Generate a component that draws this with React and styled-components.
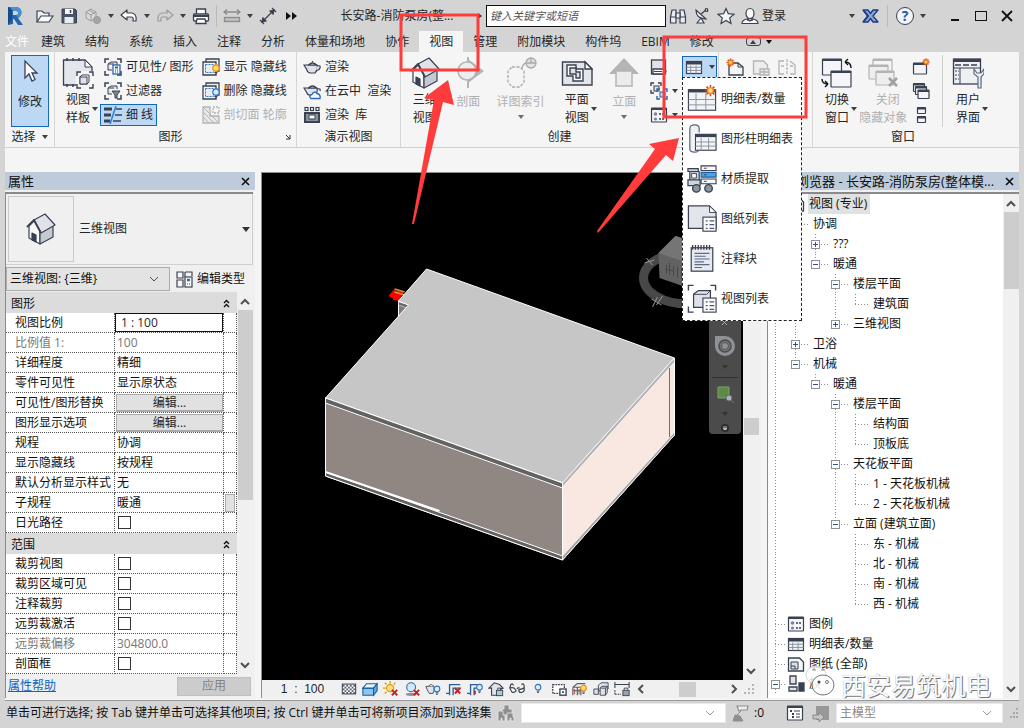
import React from "react";
import styled, { createGlobalStyle, css } from "styled-components";

const ink = "#3a4150";
const pale = "#dfe3e9";
const off = "#b4b4b4";
const red = "#ff3b3b";

const Global = createGlobalStyle`
  *, *::before, *::after { box-sizing: border-box; }
  body { margin: 0; background: #d4d4d4; }
  body, button, input, select {
    font-family: "Open Sans", "Noto Sans CJK SC", sans-serif;
    font-size: 12px;
    line-height: 18px;
    color: #262626;
  }
  button { padding: 0; border: 0; background: none; white-space: nowrap; }
  svg { display: block; flex: none; }
`;

/* ---------- drawings ---------- */

const Brackets = ({ s = 18, c = ink }) => (
  <path d={`M1 5V1H5M${s - 5} 1H${s - 1}V5M1 ${s - 5}V${s - 1}H5M${s - 5} ${s - 1}H${s - 1}V${s - 5}`} fill="none" stroke={c} strokeWidth="1.5" />
);
const Spark = ({ x, y, r = 4 }) => (
  <g>
    <path d={`M${x} ${y - r}V${y + r}M${x - r} ${y}H${x + r}M${x - r * 0.7} ${y - r * 0.7}L${x + r * 0.7} ${y + r * 0.7}M${x + r * 0.7} ${y - r * 0.7}L${x - r * 0.7} ${y + r * 0.7}`} stroke="#d5451c" strokeWidth="1.6" />
    <circle cx={x} cy={y} r={r * 0.5} fill="#ffe27a" stroke="#f08a1c" strokeWidth="1.3" />
  </g>
);
const Bulb = ({ x, y, c = "#d5ecff", s = "#2f72b8" }) => (
  <g>
    <circle cx={x} cy={y} r="3.2" fill={c} stroke={s} strokeWidth="1.2" />
    <path d={`M${x - 1.5} ${y + 4.5}h3M${x - 1} ${y + 6}h2`} stroke={ink} />
  </g>
);
const Cross = ({ x, y }) => <path d={`M${x} ${y}l6 6M${x + 6} ${y}l-6 6`} stroke="#c8201c" strokeWidth="2.2" />;
const Win = ({ x, y, w, h, c = ink, f = "#f3f5f8" }) => (
  <g>
    <rect x={x} y={y} width={w} height={h} rx="0.5" fill={f} stroke={c} strokeWidth="1.2" />
    <path d={`M${x} ${y + 1}h${w}`} stroke={c} strokeWidth="2" />
  </g>
);
const Grid = ({ x, y, w, h, c = ink }) => (
  <g>
    <rect x={x} y={y} width={w} height={h} fill="#f2f4f7" stroke={c} strokeWidth="1.2" />
    <path d={`M${x} ${y + 1.5}h${w}`} stroke={c} strokeWidth="3" />
    <path d={`M${x + w * 0.28} ${y + 4}v${h - 4}M${x + w * 0.64} ${y + 4}v${h - 4}M${x} ${y + h * 0.48}h${w}M${x} ${y + h * 0.74}h${w}`} stroke="#8a909b" />
  </g>
);
const ListCard = ({ x, y, w = 14, h = 15 }) => (
  <g>
    <rect x={x} y={y} width={w} height={h} fill="#fbfbfc" stroke={ink} strokeWidth="1.2" />
    <path d={`M${x + 3} ${y + 4}h2M${x + 3} ${y + 8}h2M${x + 3} ${y + 12}h2M${x + 7} ${y + 4}h5M${x + 7} ${y + 8}h5M${x + 7} ${y + 12}h5`} stroke="#4d5a74" strokeWidth="1.3" />
  </g>
);
const HouseShape = () => (
  <g stroke={ink} strokeWidth="1.2" strokeLinejoin="round">
    <path d="M4 13L9 8L15 17V31L4 25Z" fill="#f6f7f9" />
    <path d="M15 31L28 24V12L15 18Z" fill="#c5cad2" />
    <path d="M9 7L20 1L30 12L16 20Z" fill={pale} />
    <path d="M2 14L9 7L16 20" fill="none" strokeWidth="1.8" />
    <path d="M7 20l4 2v7l-4-2z" fill={ink} />
  </g>
);

const art = {
  revit: [20, <><path d="M3 1h8c7 0 7 9 2 11l5 7h-5l-4-6H8v5l-5 1z" fill="#2467ad" /><path d="M3 1l4 3v9l-4 6z" fill="#174a86" /><path d="M8 5h3c3 0 3 4 0 4H8z" fill="#d4d4d4" /><path d="M11 1c7 0 7 9 2 11l-2-3c3 0 3-4 0-4H8L5 1z" fill="#4a90d0" /></>],
  open: [18, <><path d="M1 15V4h5l2 2h5v3" fill="#eceff3" stroke={ink} strokeWidth="1.2" /><path d="M1 15L5 9H17L13 15Z" fill="#fafbfc" stroke={ink} strokeWidth="1.2" /></>],
  save: [18, <><path d="M2 2H15L16.500 3.500V16H2Z" fill="#4a5366" stroke={ink} /><rect x="5" y="2" width="8" height="5" fill="#f4f6f8" /><rect x="4.500" y="10" width="9" height="6" fill="#e8ebef" /><path d="M10.500 3v3" stroke={ink} strokeWidth="1.500" /></>],
  sync: [18, <g stroke="#9a9a9a" fill="#d8d8d8"><path d="M2 5l5-3 5 3v6l-5 3-5-3z" /><path d="M2 5l5 3 5-3M7 8v6M5 3l5 3" fill="none" /><circle cx="13" cy="13" r="3.500" fill="#a5a5a5" /></g>],
  undo: [18, <path d="M1 8L7 3V6H12Q17 7 16 14H13Q14 10 11 10H7V13Z" fill="#fff" stroke={ink} strokeWidth="1.2" strokeLinejoin="round" />],
  redo: [18, <path d="M17 8L11 3V6H6Q1 7 2 14H5Q4 10 7 10H11V13Z" fill="none" stroke="#9c9c9c" strokeWidth="1.2" strokeLinejoin="round" />],
  print: [18, <g stroke={ink} strokeWidth="1.3"><path d="M4.500 7V2h9v5" fill="#fff" /><rect x="1.500" y="7" width="15" height="7" rx="1" fill="#fff" /><path d="M2 8h14v2H2z" fill={ink} stroke="none" /><path d="M5 12h8l1 4.500H4z" fill="#fff" /></g>],
  measure: [18, <g stroke="#8c8c8c" strokeWidth="1.300" fill="none"><path d="M1 5h16M4 2.500L1 5l3 2.500M14 2.500L17 5l-3 2.500" /><rect x="1.500" y="10.500" width="15" height="4" fill="#c0c0c0" /></g>],
  dim: [18, <g stroke={ink} strokeWidth="1.200" fill={ink}><path d="M4 14L14 4" /><path d="M3 15l1-4 3 3zM15 3l-4 1 3 3z" /><path d="M1 13l4 4M13 1l4 4" fill="none" /></g>],
  more: [12, <path d="M0 2l5 4-5 4zM6 2l5 4-5 4z" fill="#111" />],
  binoc: [18, <g stroke={ink} strokeWidth="1.200" fill="#e9ecf0"><path d="M1.500 10L3 3h4v13H1.500zM16.500 10L15 3h-4v13h5.500z" /><path d="M7 6h4v5H7zM1.500 10H7M11 10h5.500" /></g>],
  dish: [18, <g stroke={ink} strokeWidth="1.200" fill="#f1f3f5"><path d="M3 3Q3 12 13 12Z" /><path d="M8 7l5-4M12 2.500l3 2M4 16l4-5 3 5z" /><circle cx="13.500" cy="3" r="1.300" /></g>],
  star: [18, <path d="M9 1.500L11.300 6.700L17 7.200L12.700 10.900L14 16.500L9 13.500L4 16.500L5.300 10.900L1 7.200L6.700 6.700Z" fill="#f6f7f8" stroke={ink} strokeWidth="1.200" />],
  user: [18, <g stroke={ink} strokeWidth="1.200" fill="#fafafa"><path d="M1 16.500Q1 13 6 12L9 14l3-2q5 1 5 4.500z" /><ellipse cx="9" cy="6.500" rx="4" ry="5" /><path d="M7 11v3M11 11v3" /></g>],
  exchange: [18, <g strokeLinejoin="round"><path d="M2 3h5l2.500 3.500L12 3h5l-5 6 5 6h-5l-2.500-3.500L7 15H2l5-6z" fill="#8fa3d0" stroke="#1d3b80" strokeWidth="1.300" /><path d="M3 4l4 5-4 5" stroke="#1d3b80" fill="none" strokeWidth="2" /></g>],
  min: [16, <path d="M4 12h8" stroke="#111" strokeWidth="2" />],
  max: [16, <rect x="2.500" y="3.500" width="11" height="9" fill="none" stroke="#111" />],
  close: [16, <path d="M3 3l10 10M13 3L3 13" stroke="#111" strokeWidth="1.800" />],
  cursor: [32, <path d="M11 4V21L15 17L18 24L21 22.500L18 16H23Z" fill="#fff" stroke={ink} strokeWidth="1.300" />],
  template: [32, <g><path d="M1.500 3V28H30V10L23 3H1.500z" fill="#e3e6eb" stroke={ink} strokeWidth="1.300" /><path d="M23 3v7h7z" fill="#fff" stroke={ink} /><path d="M5 1v3M11 1v3M17 1v3M5 27v3M11 27v3" stroke={ink} strokeWidth="1.500" /><rect x="14" y="14" width="18" height="18" fill="#f5f5f5" /><path d="M15 19v-4h4M27 15h4v4M15 27v4h4M31 27v4h-4" fill="none" stroke={ink} strokeWidth="1.400" /><path d="M18 20l2-2h7v7l-2 2h-7z" fill="#fff" stroke={ink} /><rect x="18" y="20" width="7" height="7" fill={pale} stroke={ink} /></g>],
  visible: [18, <><Brackets /><path d="M4 6l3-2h6v3M4 6v6h4M4 6h6" fill={pale} stroke={ink} /><rect x="9" y="7" width="7" height="9" fill="#fff" stroke="#2a62a8" strokeWidth="1.300" /><path d="M11 9.500h3" stroke="#2a62a8" strokeWidth="2" /><path d="M11 12h1M13 12h1M11 14h1M13 14h1" stroke={ink} /></>],
  filter: [18, <><Brackets /><path d="M4 6l3-2h6v3M4 6v6h4M4 6h6" fill={pale} stroke={ink} /><path d="M8 9h8l-3 4v3h-2v-3z" fill="#7d8697" stroke={ink} /></>],
  thin: [18, <><path d="M0 3h8M0 9h7M0 15h6" stroke={ink} strokeWidth="3" /><path d="M12 3h6M11 9h7M9 15h8" stroke={ink} strokeWidth="1.300" /><path d="M12 0L6 18" stroke="#2b82dd" strokeWidth="1.600" /></>],
  showHidden: [18, <><path d="M4 4V1h13v12h-2M1 4h13v13H1z" fill="none" stroke={ink} strokeWidth="1.300" /><path d="M3.500 6.500h8v8h-8z" fill="#e8ebef" stroke="#2c7ac9" strokeDasharray="2 1" /><Bulb x={14} y={10} c="#ffd86a" s="#ef8d17" /></>],
  hideHidden: [18, <><path d="M4 4V1h13v12h-2M1 4h13v13H1z" fill="none" stroke={ink} strokeWidth="1.300" /><path d="M3.500 6.500h8v8h-8z" fill="#e8ebef" stroke="#2c7ac9" strokeDasharray="2 1" /><Bulb x={14} y={10} /></>],
  cutProfile: [18, <g stroke={off} fill="none" strokeWidth="1.300"><path d="M1 1h7v9h9v7H1z" fill="#e8e8e8" /><path d="M1 6l11 11M1 11l6 6M2 2l14 14" strokeWidth="1" /><path d="M11 1h6v6h-6z" strokeDasharray="2 1" /></g>],
  teapot: [18, <g stroke={ink} strokeWidth="1.200" fill={pale}><path d="M5 7h9q1 5-2 8H7Q4 14 4 12L1 7h3z" /><path d="M5.500 7q4-4 8 0zM14 8q4-1 3 2t-4 2" /><path d="M9.500 4V3" /></g>],
  cloud: [18, <><g stroke={ink} strokeWidth="1.200" fill={pale}><path d="M5 6h9q1 5-2 7H7Q4 13 4 11L1 6h3z" /><path d="M5.500 6q4-4 8 0zM14 7q4-1 3 2" /></g><path d="M8 16.500q-3-3 1-4 2-4 5-1 4 1 3 5z" fill="#fff" stroke="#2b68c0" strokeWidth="1.300" /></>],
  gallery: [18, <><g fill="#fff" stroke={ink} strokeWidth="1.200"><rect x="2" y="1.500" width="3" height="3" /><rect x="7.500" y="1.500" width="3" height="3" /><rect x="13" y="1.500" width="3" height="3" /></g><rect x="2" y="7" width="14" height="9" fill="#8b93a1" stroke={ink} strokeWidth="2" /><rect x="6" y="9" width="6" height="4" fill="#fff" stroke={ink} /></>],
  house: [32, <HouseShape />],
  section: [32, <g><path d="M16 0v31" stroke={off} strokeWidth="2" /><path d="M16 2l16 12-16 12z" fill={off} /><circle cx="15" cy="14" r="9" fill="#eee" stroke={off} strokeWidth="1.500" /></g>],
  callout: [32, <g fill="none" stroke="#a9a9a9" strokeWidth="1.300"><path d="M7 10h8l4 4v11l-4 5H7l-4-5V14z" strokeDasharray="3 1.500" /><path d="M17 11q1-5 5-5" /><circle cx="26" cy="6" r="5" fill="#e3e3e3" /><path d="M21 6h10M26 1v5" /></g>],
  plan: [32, <g stroke={ink} strokeWidth="1.400"><path d="M1.500 5H24l7 7v16H1.500z" fill="#e2e6eb" /><path d="M24 5v7h7z" fill="#fff" /><path d="M6 8h9v4h7v12H12v-5H6z" fill="#fff" /><path d="M9 11h6v4h4v6h-4v-4H9z" fill={pale} /></g>],
  elevation: [32, <g><path d="M16 1L31 17H1z" fill={off} /><rect x="8" y="14" width="16" height="15" fill="#ebebeb" stroke={off} strokeWidth="1.500" /></g>],
  drafting: [18, <><rect x="1.500" y="2" width="14" height="14" fill={pale} stroke={ink} strokeWidth="1.300" /><path d="M3 11h11q4 2 0 5H3z" fill="#fff" stroke={ink} strokeWidth="1.300" /><path d="M4 13.500h8" stroke={ink} /></>],
  duplicate: [18, <><path d="M1 4V1h3M8 1h3v3M1 8v3h3" fill="none" stroke={ink} strokeWidth="1.400" /><rect x="4" y="4" width="5" height="5" fill={pale} stroke={ink} /><path d="M7 10V7h3M14 7h3v3M7 14v3h3M17 14v3h-3" fill="none" stroke="#2464ac" strokeWidth="1.400" /><rect x="10" y="10" width="5" height="5" fill="#b9dcf6" stroke="#2464ac" /></>],
  legend: [18, <><Win x={1.500} y={2} w={15} h={14} /><path d="M9 8h6M9 13h6" stroke={ink} strokeDasharray="2 1" strokeWidth="1.500" /><circle cx="5.500" cy="8" r="1.800" fill="#7b8495" /><circle cx="5.500" cy="13" r="1.600" fill="#7b8495" /></>],
  schedule: [18, <Grid x={1.500} y={3.500} w={15} h={12} />],
  newSheet: [18, <><path d="M3 5h9l5 4v8H3z" fill="#f4f5f7" stroke={ink} strokeWidth="1.300" /><path d="M12 5v4h5" fill="none" stroke={ink} /><Spark x={4.500} y={4.500} r={4} /></>],
  titleBlock: [18, <g stroke={off} fill="#ededed" strokeWidth="1.300"><path d="M1.500 3h10l4 4v9h-14z" /><path d="M8 11h9v6H8zM8 14h9M12 11v6" /></g>],
  matchline: [18, <g stroke={off} fill="none" strokeWidth="1.300"><path d="M6 3H1v13h5M12 3l5 4v9h-5" /><path d="M9 1v16" strokeDasharray="3 1" /><path d="M3 8h3M12 8h3" /></g>],
  switchWin: [32, <><Win x={1.500} y={2} w={19} h={16} /><Win x={10} y={14} w={20} h={16} /><path d="M30 11q0-6-6-6M24 5l3-3M24 5l3 3M1 22q0 5 6 5M7 27l-3-3M7 27l-3 3" fill="none" stroke="#111" strokeWidth="1.400" /></>],
  closeHidden: [32, <><Win x={6} y={2} w={19} h={15} c={off} /><Win x={2} y={8} w={19} h={14} c={off} f="#eee" /><Win x={9} y={14} w={18} h={14} c={off} f="#eee" /><path d="M22 21l8 8M30 21l-8 8" stroke="#a0a0a0" strokeWidth="2.500" /></>],
  newWin: [18, <><Win x={1.500} y={5} w={13} h={11} /><Spark x={14} y={4} r={3.500} /></>],
  cascade: [18, <><Win x={1.500} y={1.500} w={11} h={8} /><Win x={3.500} y={4.500} w={11} h={8} /><Win x={6} y={8} w={11} h={8.500} /></>],
  tile: [18, <><Win x={5.500} y={1.500} w={8} h={6} /><Win x={5.500} y={10.500} w={8} h={6} /></>],
  ui: [32, <><rect x="1.500" y="2" width="27" height="25" fill="#eef0f3" stroke={ink} strokeWidth="1.300" /><path d="M1.500 3.500h27" stroke={ink} strokeWidth="3" /><path d="M3 8h6M11 8h6M19 8h6" stroke={ink} strokeWidth="1.400" /><path d="M1.500 11h27M8 11v16" stroke={ink} /><path d="M3 14h4M3 18h4M3 22h4" stroke={ink} strokeDasharray="2 1" /><path d="M22 12l0 5 4 3v11h3V20l3-3v-5l-3 4h-4z" fill="#eceff3" stroke="#5d6b85" strokeWidth="1.200" /></>],
  mSchedule: [32, <><Grid x={1.500} y={6} w={29} h={22} /><Spark x={25} y={7} r={6} /></>],
  mColumn: [32, <><path d="M3 5q0-4 5-4t5 4v22q0 3-5 3t-5-3z" fill="#eef0f3" stroke="#5b6475" strokeWidth="1.300" /><rect x="7" y="9" width="25" height="20" fill="#fff" /><Grid x={9} y={11} w={22} h={17} /></>],
  mMaterial: [32, <><path d="M1 5h11v3H1zM3 8h10v9H3zM1 17h13v6H1z" fill="#cfd5dd" stroke={ink} strokeWidth="1.300" /><path d="M5 10h5v5H5z" fill="#fff" stroke={ink} /><circle cx="10" cy="26" r="4" fill="#8c94a2" stroke={ink} strokeWidth="1.500" /><circle cx="23" cy="26" r="4" fill="#8c94a2" stroke={ink} strokeWidth="1.500" /><path d="M15 2h16v5H15zM15 16h16v5H15z" fill="#f6f7f9" stroke={ink} strokeWidth="1.200" /><path d="M15 9h16v5H15z" fill="#4ba3e3" stroke="#1b5fa3" strokeWidth="1.200" /><path d="M18 4.500h3M18 11.500h3M18 18.500h3" stroke={ink} /></>],
  mSheet: [32, <><path d="M1.500 2H24l7 7v17h-29.500z" fill="#e2e6ec" stroke={ink} strokeWidth="1.300" /><path d="M24 2v7h7z" fill="#fff" stroke={ink} /><ListCard x={17} y={14} /></>],
  mNote: [32, <><rect x="4.500" y="4" width="23" height="25" fill="#e6eaf0" stroke={ink} strokeWidth="1.300" /><path d="M6 1v5M9 1v5M12 1v5M15 1v5M18 1v5M21 1v5M24 1v5" stroke={ink} strokeWidth="1.400" /><path d="M8 10h16M8 13h12M8 16h16M8 19h10M8 22h16M8 25h8" stroke="#5c6b86" strokeWidth="1.200" /></>],
  mView: [32, <><path d="M1.500 7V1.500H7M25 1.500h5.500V7M1.500 24v6H7" fill="none" stroke={ink} strokeWidth="1.500" /><path d="M7 11l5-4h13v14l-4 4H7z" fill={pale} stroke={ink} strokeWidth="1.300" /><path d="M7 11h14l4-4" fill="none" stroke={ink} /><ListCard x={17} y={15} /></>],
  editType: [18, <><path d="M1 2h6v6H1zM9 2h7v4M1 10h6v7H1zM9 7V2" fill="#f7f7f8" stroke={ink} strokeWidth="1.200" /><rect x="9" y="7" width="7" height="10" fill="#fff" stroke={ink} strokeWidth="1.200" /><path d="M11 10h3" stroke="#2569b6" strokeWidth="2.500" /><path d="M11 14h1M13 14h1" stroke={ink} /></>],
  detail: [18, <><rect x="1.500" y="3.500" width="15" height="11" fill="#fff" stroke={ink} strokeWidth="1.200" /><path d="M2 5.500h14M2 9.500h14M2 13.500h14" stroke="#59606c" strokeDasharray="2 2" strokeWidth="2" /><path d="M4 7.500h12M4 11.500h12" stroke="#59606c" strokeDasharray="2 2" strokeWidth="2" /></>],
  style: [18, <g stroke="#1d5e9e" strokeWidth="1.200"><path d="M1 8h12v8H1z" fill="#8cc4ee" /><path d="M1 8l4-5h12l-4 5z" fill="#e3f2fd" /><path d="M13 16V8l4-5v8z" fill="#5ea9e0" /></g>],
  sun: [18, <><circle cx="8" cy="8" r="4" fill="#ffdf7e" stroke="#e49a13" strokeWidth="1.300" /><path d="M8 0v3M0 8h3M2 2l2 2M14 2l-2 2M2 14l2-2" stroke="#e49a13" strokeWidth="1.500" /><Cross x={10} y={10} /></>],
  shadow: [18, <><circle cx="8" cy="7" r="5" fill="#cfe8fb" stroke="#2b6aa8" strokeWidth="1.200" /><ellipse cx="8" cy="15" rx="6" ry="1.800" fill="#8a919d" /><Cross x={11} y={10} /></>],
  render: [18, <><path d="M3 6h7q1 5-1 8H5Q3 12 1 6z" fill={pale} stroke={ink} /><path d="M4 6q3-4 6 0" fill="#fff" stroke={ink} /><Bulb x={13.500} y={9} /></>],
  crop: [18, <><path d="M0 14h4M4 16V4h12M8 16V8h9" fill="none" stroke="#285f9f" strokeWidth="1.500" /><Cross x={10} y={8} /></>],
  cropShow: [18, <><path d="M0 14h4M4 16V4h8M8 16V8h3" fill="none" stroke="#285f9f" strokeWidth="1.500" /><path d="M9 11v4" stroke="#c8201c" strokeWidth="2" /><Bulb x={14} y={7} /></>],
  lockView: [18, <><path d="M1 8l6-6 6 2 4 4-3 1v7H4V8z" fill={pale} stroke={ink} strokeWidth="1.200" /><rect x="9.500" y="10.500" width="7" height="6" fill="#a9d2c6" stroke={ink} /><path d="M11 10V8h4v2" fill="none" stroke={ink} /></>],
  glasses: [18, <g fill="none" stroke={ink} strokeWidth="1.300"><path d="M1 8l1-4q2-2 3 1M9 9q1-2 3-1M17 8V5q-1-3-3-1" /><path d="M1 8q2-1 5 0l2 3q-2 3-5 1zM11 10l6-2q1 4-3 5-3 0-3-3z" fill="#fff" /></g>],
  reveal: [18, <Bulb x={9} y={7} />],
  tempProps: [18, <><path d="M2 4h13v10H2z" fill="#fff" stroke={ink} strokeWidth="1.500" strokeDasharray="2 1" /><rect x="10" y="9" width="7" height="7" fill="#fff" stroke={ink} strokeWidth="1.500" /><rect x="12.500" y="11.500" width="2" height="2" fill={ink} /></>],
  analytic: [18, <><path d="M1 7l5-4h9M1 7v9M6 7v9M1 7h9M10 7v9M1 11h9" fill="none" stroke="#59606c" strokeWidth="1.300" /><path d="M3 9v6M8 9v6" stroke="#b93a2a" /><Bulb x={13} y={8} c="#ffd86a" s="#ef8d17" /></>],
  displace: [18, <g fill={pale} stroke={ink}><path d="M6 5l3-3h8v7l-3 2H6z" /><path d="M1 9h5v6H1zM8 8l2-2h6v7l-2 3H8z" /><path d="M8 8h6v8M14 8l2-2" fill="none" /></g>],
  constraint: [18, <><path d="M1 1v7M17 1v7M1 4h16" fill="none" stroke={ink} strokeWidth="1.200" /><path d="M1 10v6M1 15h7" fill="none" stroke={ink} strokeWidth="1.200" strokeDasharray="2 1" /><rect x="10" y="10.500" width="7" height="6" fill="#9ca3af" stroke={ink} /><path d="M11.500 10V8h4v2" fill="none" stroke={ink} /></>],
  people: [18, <g fill="#8f8f8f" stroke="#e6e6e6" strokeWidth=".8"><path d="M7 1h5v4h3v6H5V5h2z" /><path d="M1 7h5v4h2v6H5v-3H4v3H1zM10 9h6v4h1v4h-3v-3h-1v3h-3z" /></g>],
  brush: [18, <><path d="M5 2h11l-1 4H9l-2 1z" fill="#eee" stroke="#8e8e8e" strokeWidth="1.200" /><path d="M9 7l-4 4M3 11l5 1 3 5H1z" fill="#8e8e8e" stroke="#8e8e8e" /></>],
  options: [18, <><Win x={1.500} y={2} w={15} h={14} f="#fff" /><path d="M4 7h2M6 10h2M6 13h2" stroke={ink} strokeWidth="2" /><path d="M8 7h6M10 10h4M10 13h4" stroke={ink} /></>],
  exclude: [18, <><rect x="4" y="2" width="13" height="14" fill="#989898" /><path d="M1 11h6V8l5 5-5 5v-3H1z" fill="#c4c4c4" stroke="#8a8a8a" /></>],
  sheets: [18, <><path d="M1.500 3h11l4 4v9h-15z" fill="#f4f5f7" stroke={ink} strokeWidth="1.300" /><path d="M4 7h7v7H4zM4 11h4v3" fill={pale} stroke={ink} /></>],
  family: [18, <g stroke={ink} strokeWidth="1.300"><path d="M3 1h6v8H3zM2 12h8v4H2z" fill={pale} /><path d="M12 8h5v8h-5z" fill={ink} /></g>],
};

const Art = ({ name, size }) => {
  const [box, body] = art[name];
  return <svg width={size || box} height={size || box} viewBox={`0 0 ${box} ${box}`} aria-hidden="true">{body}</svg>;
};
const Caret = ({ c = "#3f3f3f" }) => (
  <svg width="6" height="4" viewBox="0 0 6 4" aria-hidden="true"><path d="M0 0h6L3 4z" fill={c} /></svg>
);
const turns = { up: "M1 8l4-4 4 4", down: "M1 3l4 4 4-4", left: "M7 1L3 5l4 4", right: "M3 1l4 4-4 4" };
const Chevron = ({ to = "down", c = "#505050", w = 2 }) => (
  <svg width="10" height="10" viewBox="0 0 10 10" aria-hidden="true"><path d={turns[to]} fill="none" stroke={c} strokeWidth={w} /></svg>
);

/* ---------- frame ---------- */

const Shell = styled.div`
  position: relative;
  display: flex;
  flex-direction: column;
  height: 100vh;
  padding: 0 5px;
  overflow: hidden;
  background: #d4d4d4;
`;

const TitleBar = styled.header`
  display: flex;
  align-items: center;
  height: 31px;
  flex: none;
`;
const ToolButton = styled.button`
  display: flex;
  align-items: center;
  justify-content: center;
  width: 24px;
  height: 24px;
  flex: none;
`;
const LogoButton = styled(ToolButton)`width: 28px; justify-content: flex-start;`;
const CaretButton = styled(ToolButton)`width: 12px;`;
const Divider = styled.span`
  width: 1px;
  height: 22px;
  margin: 0 ${(p) => (p.$wide ? 5 : 3)}px;
  background: #b9b9b9;
`;
const DocTitle = styled.h1`
  flex: 1;
  min-width: 0;
  margin: 0;
  padding-left: 16px;
  text-align: center;
  font-size: 12px;
  font-weight: 400;
  white-space: nowrap;
  overflow: hidden;
`;
const Search = styled.input`
  width: 180px;
  height: 22px;
  padding: 0 3px;
  border: 1px solid #111;
  background: #fff;
  font-size: 11px;
  font-style: italic;
  &::placeholder { color: #555; opacity: 1; }
`;
const SignIn = styled.button`width: 84px; text-align: left;`;
const HelpMark = styled.span`
  width: 18px;
  height: 18px;
  border: 1px solid ${ink};
  border-radius: 50%;
  background: #f2f4f7;
  color: #1f58b0;
  font-size: 14px;
  font-weight: 700;
  line-height: 16px;
`;
const WindowButtons = styled.div`
  display: flex;
  justify-content: flex-end;
  gap: 2px;
  width: 90px;
`;

const Tabs = styled.nav`
  display: flex;
  align-items: stretch;
  height: 21px;
  flex: none;
`;
const Tab = styled.button`
  padding: 0 ${(p) => (p.$file ? "2px 0 0" : "10px")};
  color: ${(p) => (p.$file ? "#fff" : "#262626")};
  background: ${(p) => (p.$active ? "#f5f5f5" : "transparent")};
  line-height: 21px;
`;
const Collapse = styled.button`
  display: flex;
  align-items: center;
  gap: 5px;
  margin-left: 22px;
`;
const CollapseFace = styled.span`
  display: grid;
  place-items: center;
  width: 15px;
  height: 9px;
  border: 1px solid ${ink};
  border-radius: 3px;
  svg { transform: rotate(180deg); }
`;

/* ---------- ribbon ---------- */

const Ribbon = styled.section`
  display: flex;
  height: 96px;
  flex: none;
  background: #f5f5f5;
  border-bottom: 1px solid #d0d0d0;
`;
const PanelBox = styled.section`
  display: flex;
  flex-direction: column;
  width: ${(p) => p.$w}px;
  flex: none;
  padding-top: 3px;
  border-right: ${(p) => (p.$last ? "0" : "1px solid #d6d6d6")};
`;
const PanelBody = styled.div`
  display: flex;
  height: 72px;
  padding-left: ${(p) => p.$pad || 1}px;
`;
const PanelTitle = styled.h2`
  display: flex;
  align-items: center;
  justify-content: center;
  gap: 6px;
  height: 20px;
  margin: 0;
  font-size: 12px;
  font-weight: 400;
`;
const Launcher = styled.button`
  margin: 0 4px 0 auto;
`;
const TitleText = styled.span`
  flex: 1;
  padding-left: 8px;
  text-align: center;
`;
const Big = styled.button`
  display: flex;
  flex-direction: column;
  align-items: center;
  gap: ${(p) => (p.$single ? 4 : 2)}px;
  width: ${(p) => p.$w || 44}px;
  padding-top: 2px;
  color: ${(p) => (p.$off ? "#b0b0b0" : "#262626")};
  ${(p) => p.$on && css`
    width: 38px;
    margin-left: 5px;
    padding-top: 1px;
    border: 1px solid #1467bd;
    background: #bcd8f4;
  `}
`;
const BigLabel = styled.span`
  display: flex;
  align-items: center;
  gap: 2px;
  padding-left: ${(p) => (p.$caret ? 8 : 0)}px;
  white-space: pre;
`;
const Column = styled.div`
  display: flex;
  flex-direction: column;
  align-items: flex-start;
  gap: 2px;
  padding: 1px 0;
`;
const Small = styled.button`
  display: flex;
  align-items: center;
  gap: 4px;
  height: 22px;
  padding: 0 3px;
  white-space: pre;
  border: 1px solid ${(p) => (p.$on ? "#1467bd" : "transparent")};
  background: ${(p) => (p.$on ? "#bcd8f4" : "transparent")};
  color: ${(p) => (p.$off ? "#b0b0b0" : "#262626")};
`;
const Rule = styled.span`
  width: 1px;
  margin-left: 8px;
  background: #d0d0d0;
`;
const Anchor = styled.div`
  position: relative;
  margin: 0 1px 0 auto;
  padding-top: 1px;
`;
const ScheduleButton = styled(Small)`
  width: 35px;
  gap: 6px;
  justify-content: center;
`;
const Menu = styled.ul`
  position: absolute;
  z-index: 3;
  top: 22px;
  left: 0;
  width: 120px;
  margin: 0;
  padding: 1px 0;
  list-style: none;
  border: 1px dashed #222;
  background: #fff;
`;
const MenuItem = styled.button`
  display: flex;
  align-items: center;
  gap: 4px;
  width: 100%;
  height: 40px;
  padding-left: 4px;
`;

const BigTool = ({ icon, text, caret, below, ...rest }) => (
  <Big $single={!text.includes("\n")} {...rest}>
    <Art name={icon} />
    <BigLabel $caret={caret}>{text}{caret && <Caret />}</BigLabel>
    {below && <Caret c="#6d6d6d" />}
  </Big>
);
const SmallTool = ({ icon, text, caret, ...rest }) => (
  <Small aria-label={text || icon} {...rest}>
    <Art name={icon} />
    {text}
    {caret && <Caret />}
  </Small>
);

const menuItems = [
  ["mSchedule", "明细表/数量"],
  ["mColumn", "图形柱明细表"],
  ["mMaterial", "材质提取"],
  ["mSheet", "图纸列表"],
  ["mNote", "注释块"],
  ["mView", "视图列表"],
];

/* ---------- work area ---------- */

const Work = styled.main`
  display: grid;
  grid-template-columns: 250px minmax(0, 1fr) 252px;
  grid-template-rows: minmax(0, 1fr);
  column-gap: 6px;
  flex: 1;
  min-height: 0;
  padding: 24px 0 2px;
  background: #f5f5f5;
  border-bottom: 1px solid #9a9a9a;
`;
const Palette = styled.section`
  position: relative;
  display: flex;
  flex-direction: column;
  min-height: 0;
  background: #f0f0f0;
`;
const PaletteHead = styled.header`
  display: flex;
  align-items: center;
  justify-content: space-between;
  height: 18px;
  flex: none;
  padding: 0 5px 0 3px;
  background: #bdcbda;
  color: #111;
  font-size: 13px;
  white-space: nowrap;
`;
const PaletteBody = styled.div`
  display: flex;
  flex-direction: column;
  flex: 1;
  min-height: 0;
  margin: 2px ${(p) => p.$inset || 0}px 0 0;
  border: solid #8a8a8a;
  border-width: 2px 0 0 1px;
`;
const TypePick = styled.button`
  display: flex;
  align-items: center;
  gap: 5px;
  height: 71px;
  flex: none;
  padding: 0 2px;
  border: solid #cfcfcf;
  border-width: 0 1px 1px 0;
  text-align: left;
`;
const Thumb = styled.span`
  display: grid;
  place-items: center;
  width: 66px;
  height: 66px;
  border: 1px solid #cacaca;
`;
const Grow = styled.span`flex: 1;`;
const TypeRow = styled.div`
  display: flex;
  align-items: center;
  gap: 6px;
  height: 27px;
  flex: none;
`;
const SelectBox = styled.span`
  display: grid;
  grid-template-columns: minmax(0, 1fr) 20px;
  align-items: center;
  width: ${(p) => p.$w}px;
  height: ${(p) => p.$h || 20}px;
  flex: none;
  background: ${(p) => p.$bg || "#fff"};
  border: 1px solid ${(p) => p.$line || "#e8e8e8"};
  select {
    grid-area: 1 / 1 / 2 / 3;
    appearance: none;
    width: 100%;
    padding: 0 3px;
    border: 0;
    background: transparent;
    color: ${(p) => p.$ink || "#111"};
  }
  svg { grid-area: 1 / 2; pointer-events: none; }
`;
const TypeEdit = styled.button`display: flex; align-items: center; gap: 3px; color: #111;`;
const Scroller = styled.div`display: flex; flex: 1; min-height: 0;`;
const Fill = styled.div`flex: 1; min-width: 0; min-height: 0; overflow: hidden;`;

const PropTable = styled.table`
  width: 100%;
  table-layout: fixed;
  border-collapse: separate;
  border-spacing: 0;
  background: #fff;
  color: #111;
  td, th {
    height: 20px;
    padding: 0;
    font-weight: 400;
    line-height: 17px;
    text-align: left;
    white-space: nowrap;
    border-bottom: 1px dotted #555;
    border-right: 1px dotted #555;
  }
  tbody th { padding-left: 9px; }
`;
const GroupRow = styled.tr`
  &&& th { padding: 0 6px 0 2px; background: #dcdcdc; border-color: #dcdcdc; border-style: solid; }
`;
const GroupLine = styled.span`
  display: flex;
  align-items: center;
  justify-content: space-between;
  height: 17px;
`;
const PropRow = styled.tr`color: ${(p) => (p.$dim ? "#777" : "#111")};`;
const Value = styled.span`display: block; height: 17px; padding-left: 2px;`;
const ScaleField = styled.input`
  display: block;
  width: 100%;
  height: 19px;
  padding: 0 5px;
  border: 1px solid #111;
`;
const EditButton = styled.button`
  display: block;
  width: calc(100% - 1px);
  height: 18px;
  margin-left: 1px;
  border: 1px solid #aaa;
  border-bottom-width: 2px;
  background: #e1e1e1;
  line-height: 15px;
`;
const Check = styled.input`
  appearance: none;
  display: block;
  width: 13px;
  height: 13px;
  margin: 0 0 0 3px;
  border: 1px solid #333;
  background: #fff;
  &:checked { background: #333; }
`;
const MoreButton = styled.button`
  display: block;
  width: 10px;
  height: 18px;
  margin-left: 1px;
  border: 1px solid #aaa;
  background: #e1e1e1;
`;
const PropFoot = styled.footer`
  display: flex;
  align-items: center;
  justify-content: space-between;
  height: 24px;
  flex: none;
  padding: 0 2px;
  a { color: #0a62c8; }
`;
const ApplyButton = styled.button`
  width: 74px;
  height: 19px;
  border: 1px solid #bfbfbf;
  background: #cccccc;
  color: #838383;
  line-height: 16px;
`;

const VBar = styled.div`
  display: flex;
  flex-direction: column;
  align-items: center;
  width: 16px;
  flex: none;
  padding: 4px 0;
  gap: 4px;
  background: #f0f0f0;
  svg:last-child { margin-top: auto; }
`;
const Grip = styled.span`
  width: ${(p) => p.$w || 15}px;
  height: ${(p) => p.$h || 17}px;
  margin: ${(p) => (p.$mid ? "auto 0" : "0")};
  flex: none;
  background: #cdcdcd;
`;
const VSplit = styled(VBar)`
  svg:last-child { margin-top: 0; }
`;

const View = styled.section`
  display: flex;
  flex-direction: column;
  min-height: 0;
  padding-right: 2px;
  background: #f0f0f0;
  border: solid #8f8f8f;
  border-width: 1px 0 0 1px;
`;
const Canvas = styled.div`
  position: relative;
  flex: 1;
  min-width: 0;
  background: #000;
  overflow: hidden;
  > svg { width: 100%; height: 100%; }
`;
const NavBar = styled.div`
  position: absolute;
  top: 130px;
  right: 2px;
  display: flex;
  flex-direction: column;
  align-items: center;
  gap: 8px;
  width: 32px;
  padding: 16px 0 2px;
  border-radius: 4px;
  background: #4b4b4b;
`;
const NavLine = styled.span`width: 26px; height: 1px; background: #2f2f2f;`;
const ViewBar = styled.div`
  display: flex;
  align-items: center;
  height: 18px;
  flex: none;
`;
const ScaleButton = styled.button`
  width: 76px;
  padding-left: 5px;
  font-family: "Liberation Sans", "Noto Sans CJK SC", sans-serif;
  white-space: pre;
`;
const ViewButton = styled.button`display: grid; place-items: center; width: 21px; height: 18px; flex: none;`;
const HBar = styled.div`
  display: flex;
  align-items: center;
  justify-content: space-between;
  flex: 1;
  padding: 0 4px;
`;

const Tree = styled.ul`
  margin: 0;
  padding: 0;
  list-style: none;
  background: #fff;
  color: #111;
  height: 100%;
`;
const TreeRow = styled.li`
  display: flex;
  align-items: center;
  height: 20px;
  white-space: nowrap;
`;
const dots = (dir) => `repeating-linear-gradient(${dir}, #8c8c8c 0 1px, transparent 1px 3px)`;
const stubWidth = { text: 24, icon: 19 };
const Guide = styled.span`
  display: flex;
  align-items: center;
  width: ${(p) => stubWidth[p.$stub] || 20}px;
  height: 20px;
  flex: none;
  padding-left: 3px;
  background-repeat: no-repeat;
  background-image: ${(p) => `${p.$line ? dots("180deg") : "none"}, ${p.$stub ? dots("90deg") : "none"}`};
  background-position: 7px 0, 7px 10px;
  background-size: 1px ${(p) => (p.$end ? "10px" : "20px")}, 14px 1px;
`;
const Toggle = styled.button`width: 9px; height: 9px;`;
const TreeIcon = styled.span`width: 21px; flex: none; background: #fff;`;
const TreeText = styled.span`
  padding: 0 3px 0 1px;
  background: ${(p) => (p.$sel ? "#e1e1e1" : "transparent")};
  line-height: 20px;
`;
const Watermark = styled.div`
  position: absolute;
  right: 28px;
  bottom: 0;
  display: flex;
  align-items: flex-end;
  gap: 6px;
  height: 32px;
  color: #fbfbfb;
  font-size: 25px;
  line-height: 26px;
  white-space: nowrap;
  text-shadow: 1px 1px 0 #777, 0 0 1px #999;
`;

const StatusBar = styled.footer`
  display: flex;
  align-items: center;
  gap: 6px;
  height: 27px;
  flex: none;
  padding: 0 0 3px 1px;
  color: #111;
`;
const StatusText = styled.span`
  flex: 1;
  min-width: 0;
  overflow: hidden;
  white-space: nowrap;
`;
const StatusGroup = styled.div`
  display: flex;
  align-items: center;
  gap: ${(p) => p.$gap}px;
  width: ${(p) => p.$w}px;
`;

const Annotations = styled.svg`
  position: absolute;
  z-index: 5;
  top: 0;
  left: 0;
  pointer-events: none;
`;

/* ---------- data ---------- */

const viewProps = [
  { label: "视图比例", kind: "field", value: "1 : 100" },
  { label: "比例值 1:", value: "100", dim: true },
  { label: "详细程度", value: "精细" },
  { label: "零件可见性", value: "显示原状态" },
  { label: "可见性/图形替换", kind: "edit" },
  { label: "图形显示选项", kind: "edit" },
  { label: "规程", value: "协调" },
  { label: "显示隐藏线", value: "按规程" },
  { label: "默认分析显示样式", value: "无" },
  { label: "子规程", value: "暖通", more: true },
  { label: "日光路径", kind: "check" },
];
const extentProps = [
  { label: "裁剪视图", kind: "check" },
  { label: "裁剪区域可见", kind: "check" },
  { label: "注释裁剪", kind: "check" },
  { label: "远剪裁激活", kind: "check" },
  { label: "远剪裁偏移", value: "304800.0", dim: true },
  { label: "剖面框", kind: "check" },
];

/* guides: "|" draws a line, "." leaves the column empty; mark is + or -, a row without one is a leaf; end closes a branch */
const tree = [
  { g: "", mark: "-", icon: "sheets", text: "视图 (专业)", sel: true },
  { g: "|", mark: "-", text: "协调" },
  { g: "||", mark: "+", text: "???" },
  { g: "||", mark: "-", text: "暖通", end: true },
  { g: "||.", mark: "-", text: "楼层平面" },
  { g: "||.|", text: "建筑面", end: true },
  { g: "||.", mark: "+", text: "三维视图", end: true },
  { g: "|", mark: "+", text: "卫浴" },
  { g: "|", mark: "-", text: "机械", end: true },
  { g: "|.", mark: "-", text: "暖通", end: true },
  { g: "|..", mark: "-", text: "楼层平面" },
  { g: "|..|", text: "结构面" },
  { g: "|..|", text: "顶板底", end: true },
  { g: "|..", mark: "-", text: "天花板平面" },
  { g: "|..|", text: "1 - 天花板机械" },
  { g: "|..|", text: "2 - 天花板机械", end: true },
  { g: "|..", mark: "-", text: "立面 (建筑立面)", end: true },
  { g: "|...", text: "东 - 机械" },
  { g: "|...", text: "北 - 机械" },
  { g: "|...", text: "南 - 机械" },
  { g: "|...", text: "西 - 机械", end: true },
  { g: "", icon: "legend", text: "图例" },
  { g: "", icon: "schedule", text: "明细表/数量" },
  { g: "", icon: "sheets", text: "图纸 (全部)" },
  { g: "", mark: "-", icon: "family", text: "族" },
];

const viewTools = ["detail", "style", "sun", "shadow", "render", "crop", "cropShow", "lockView", "glasses", "reveal", "tempProps", "analytic", "displace", "constraint"];

/* ---------- sections ---------- */

const Tool = ({ name, label }) => <ToolButton aria-label={label || name}><Art name={name} /></ToolButton>;
const Drop = () => <CaretButton aria-label="更多"><Caret /></CaretButton>;

const Header = () => (
  <TitleBar>
    <LogoButton aria-label="Revit"><Art name="revit" /></LogoButton>
    <Tool name="open" /><Tool name="save" /><Tool name="sync" /><Drop />
    <Tool name="undo" /><Drop /><Tool name="redo" /><Drop />
    <Tool name="print" /><Divider />
    <Tool name="measure" /><Drop /><Tool name="dim" /><Tool name="more" />
    <DocTitle>长安路-消防泵房(整...</DocTitle>
    <CaretButton aria-label="展开"><svg width="4" height="6"><path d="M0 0v6l4-3z" fill="#333" /></svg></CaretButton>
    <Search aria-label="搜索" placeholder="键入关键字或短语" />
    <Tool name="binoc" /><Tool name="dish" /><Tool name="star" /><Tool name="user" />
    <SignIn>登录</SignIn>
    <Drop /><Tool name="exchange" /><Divider $wide />
    <ToolButton aria-label="帮助"><HelpMark>?</HelpMark></ToolButton><Drop />
    <WindowButtons>
      <Tool name="min" /><Tool name="max" /><Tool name="close" />
    </WindowButtons>
  </TitleBar>
);

const tabNames = ["建筑", "结构", "系统", "插入", "注释", "分析", "体量和场地", "协作", "视图", "管理", "附加模块", "构件坞", "EBIM", "修改"];

const TabStrip = () => (
  <Tabs>
    <Tab $file>文件</Tab>
    {tabNames.map((t) => <Tab key={t} $active={t === "视图"}>{t}</Tab>)}
    <Collapse aria-label="最小化功能区"><CollapseFace><Caret /></CollapseFace><Caret c="#111" /></Collapse>
  </Tabs>
);

const ViewRibbon = () => (
  <Ribbon>
    <PanelBox $w={50}>
      <PanelBody><BigTool icon="cursor" text="修改" $on /></PanelBody>
      <PanelTitle>选择 <Caret /></PanelTitle>
    </PanelBox>
    <PanelBox $w={242}>
      <PanelBody>
        <BigTool icon="template" text={"视图\n样板"} caret />
        <Column>
          <SmallTool icon="visible" text="可见性/ 图形" />
          <SmallTool icon="filter" text="过滤器" />
          <SmallTool icon="thin" text="细 线" $on />
        </Column>
        <Column>
          <SmallTool icon="showHidden" text="显示 隐藏线" />
          <SmallTool icon="hideHidden" text="删除 隐藏线" />
          <SmallTool icon="cutProfile" text="剖切面 轮廓" $off />
        </Column>
      </PanelBody>
      <PanelTitle>
        <TitleText>图形</TitleText>
        <Launcher aria-label="图形选项"><svg width="8" height="8"><path d="M2 2l4 4M6 2v4H2" fill="none" stroke="#333" /></svg></Launcher>
      </PanelTitle>
    </PanelBox>
    <PanelBox $w={104}>
      <PanelBody $pad={2}>
        <Column>
          <SmallTool icon="teapot" text="渲染" />
          <SmallTool icon="cloud" text="在云中  渲染" />
          <SmallTool icon="gallery" text="渲染  库" />
        </Column>
      </PanelBody>
      <PanelTitle>演示视图</PanelTitle>
    </PanelBox>
    <PanelBox $w={318}>
      <PanelBody $pad={2}>
        <BigTool icon="house" text={"三维\n视图"} />
        <BigTool icon="section" text="剖面" $off />
        <BigTool icon="callout" text="详图索引" below $off $w={62} />
        <BigTool icon="plan" text={"平面\n视图"} caret $w={52} />
        <BigTool icon="elevation" text="立面" below $off />
        <Column>
          <SmallTool icon="drafting" />
          <SmallTool icon="duplicate" caret />
          <SmallTool icon="legend" caret />
        </Column>
        <Anchor>
          <ScheduleButton $on aria-label="明细表"><Art name="schedule" size={18} /><Caret /></ScheduleButton>
          <Menu>
            {menuItems.map(([icon, text]) => (
              <li key={text}><MenuItem><Art name={icon} size={30} />{text}</MenuItem></li>
            ))}
          </Menu>
        </Anchor>
      </PanelBody>
      <PanelTitle>创建</PanelTitle>
    </PanelBox>
    <PanelBox $w={94} aria-label="图纸组合">
      <PanelBody $pad={3}>
        <Column><SmallTool icon="newSheet" /></Column>
        <Column><SmallTool icon="titleBlock" /></Column>
        <Column><SmallTool icon="matchline" /></Column>
      </PanelBody>
    </PanelBox>
    <PanelBox $w={180} $last>
      <PanelBody $pad={3}>
        <BigTool icon="switchWin" text={"切换\n窗口"} caret />
        <BigTool icon="closeHidden" text={"   关闭\n隐藏对象"} $off $w={52} />
        <Column>
          <SmallTool icon="newWin" />
          <SmallTool icon="cascade" />
          <SmallTool icon="tile" />
        </Column>
        <Rule />
        <BigTool icon="ui" text={"用户\n界面"} caret $w={52} />
      </PanelBody>
      <PanelTitle>窗口</PanelTitle>
    </PanelBox>
  </Ribbon>
);

const PropLine = ({ label, kind, value, dim, more }) => (
  <PropRow $dim={dim}>
    <th scope="row">{label}</th>
    <td>
      {kind === "field" && <ScaleField aria-label={label} defaultValue={value} />}
      {kind === "edit" && <EditButton aria-label={`${label} 编辑`}>编辑...</EditButton>}
      {kind === "check" && <Check type="checkbox" aria-label={label} />}
      {!kind && <Value>{value}</Value>}
    </td>
    <td>{more && <MoreButton aria-label={`${label} 选项`} />}</td>
  </PropRow>
);
const Group = ({ text }) => (
  <GroupRow>
    <th colSpan="3">
      <GroupLine>
        {text}
        <svg width="7" height="9" aria-hidden="true"><path d="M1 4l2.500-2.500L6 4M1 8l2.500-2.500L6 8" fill="none" stroke="#111" strokeWidth="1.400" /></svg>
      </GroupLine>
    </th>
  </GroupRow>
);
const CloseX = () => (
  <button aria-label="关闭"><svg width="9" height="9"><path d="M1 1l7 7M8 1L1 8" stroke="#111" strokeWidth="1.600" /></svg></button>
);

const Properties = () => (
  <Palette>
    <PaletteHead>属性<CloseX /></PaletteHead>
    <PaletteBody $inset={2}>
      <TypePick>
        <Thumb><Art name="house" /></Thumb>
        <Grow>三维视图</Grow>
        <svg width="8" height="5"><path d="M0 0h8L4 5z" fill="#333" /></svg>
      </TypePick>
      <TypeRow>
        <SelectBox $w={164} $h={24} $bg="#e3e3e3" $line="#ababab">
          <select aria-label="类型"><option>{"三维视图: {三维}"}</option></select>
          <Chevron w={1} />
        </SelectBox>
        <TypeEdit><Art name="editType" />编辑类型</TypeEdit>
      </TypeRow>
      <Scroller>
        <Fill>
          <PropTable>
            <colgroup><col width="109" /><col /><col width="13" /></colgroup>
            <tbody>
              <Group text="图形" />
              {viewProps.map((p) => <PropLine key={p.label} {...p} />)}
              <Group text="范围" />
              {extentProps.map((p) => <PropLine key={p.label} {...p} />)}
            </tbody>
          </PropTable>
        </Fill>
        <VBar><Chevron to="up" /><Grip $h={190} /><Chevron /></VBar>
      </Scroller>
      <PropFoot>
        <a href="#help">属性帮助</a>
        <ApplyButton>应用</ApplyButton>
      </PropFoot>
    </PaletteBody>
  </Palette>
);

const Model = () => (
  <svg viewBox="263 174 480 507" preserveAspectRatio="xMidYMid meet" role="img" aria-label="消防泵房三维模型">
    <path d="M389 297l5-6 9 2 1 1-4 8-6-1-1-2z" fill="#f00" />
    <path d="M395 290l10 3M395 293l10 3" stroke="#d7953a" strokeWidth="1.500" />
    <path d="M399 302V318L410 306Z" fill="#847b78" stroke="#fff" />
    <path d="M399 303l11 3-2 3-9-3z" fill="#666" stroke="#fff" strokeWidth=".5" />
    <path d="M427 270L675 359L563 484L326 399L409 306L399 302Z" fill="#c6c6c6" stroke="#fff" />
    <path d="M326 399L563 484V561L326 477Z" fill="#918782" stroke="#fff" />
    <path d="M326 399L563 484V489L326 404Z" fill="#626262" stroke="#fff" />
    <path d="M326 473L563 557V561L326 477Z" fill="#626262" stroke="#fff" />
    <path d="M326 473L440 512" stroke="#fff" strokeWidth="2" />
    <path d="M563 484L675 359V436L563 561Z" fill="#f8e8e1" stroke="#fff" />
    <path d="M563 484L675 359V363L563 488Z" fill="#b3b3b3" stroke="#fff" strokeWidth=".7" />
    <path d="M563 557L675 433V436L563 561Z" fill="#a4a4a4" stroke="#fff" strokeWidth=".7" />
    <path d="M670 369V438" stroke="#756d69" />
    <ellipse cx="688" cy="279" rx="44" ry="26" fill="none" stroke="#484848" strokeWidth="9" />
    <path d="M676 237L659 254L660 279L686 288L712 270V249Z" fill="#626262" />
    <path d="M676 237L659 254L686 263L712 249Z" fill="#757575" />
    <path d="M667 266v9M670 264v12M674 267v10M678 268v11M682 269v10M666 270l8 2" stroke="#484848" />
    <path d="M653 308l5-10M657 306l6-9M652 300l10 6M645 264l10-3M647 259l6 7" stroke="#999" />
  </svg>
);

const Viewport = () => (
  <View>
    <Scroller>
      <Canvas>
        <Model />
        <NavBar>
          <svg width="8" height="8"><path d="M1 1l5 5M6 1L1 6" stroke="#aaa" /></svg>
          <svg width="22" height="22"><path d="M1 11V1h10a10 10 0 1 1-10 10z" fill="#8e9296" /><circle cx="11" cy="11" r="6" fill="#777" stroke="#4a4a4a" strokeWidth="1.500" /><circle cx="11" cy="11" r="3.500" fill="#8e9296" stroke="#555" /></svg>
          <Caret c="#333" />
          <NavLine />
          <svg width="18" height="18"><path d="M2 1h11v11H2z" fill="#5d8a4a" stroke="#78a564" /><circle cx="13" cy="12" r="3" fill="#a9b2b8" stroke="#666" /><path d="M15 14l3 3" stroke="#777" /></svg>
          <Caret c="#333" />
          <svg width="8" height="8"><circle cx="4" cy="4" r="4" fill="#2d2d2d" /><path d="M2 3h4M4 6L2 4.500h4z" stroke="#bbb" fill="#bbb" /></svg>
        </NavBar>
      </Canvas>
      <VSplit><Chevron to="up" /><Grip $mid /><Chevron /></VSplit>
    </Scroller>
    <ViewBar>
      <ScaleButton>1  :  100</ScaleButton>
      {viewTools.map((n) => <ViewButton key={n} aria-label={n}><Art name={n} size={16} /></ViewButton>)}
      <HBar><Chevron to="left" /><Grip $w={17} $h={15} /><Chevron to="right" /></HBar>
      <svg width="16" height="16"><path d="M9 4h2M9 8h2M5 8h2M9 12h2M5 12h2M1 12h2" stroke="#b5b5b5" strokeWidth="2" /></svg>
    </ViewBar>
  </View>
);

const TreeLine = ({ g, mark, icon, text, sel, end }) => (
  <TreeRow>
    {g.split("").map((c, i) => <Guide key={i} $line={c === "|"} />)}
    <Guide $stub={icon ? "icon" : "text"} $line $end={end}>
      {mark && (
        <Toggle aria-label={`${text} 展开/折叠`}>
          <svg width="9" height="9"><rect x=".5" y=".5" width="8" height="8" fill="#fff" stroke="#919191" /><path d={mark === "+" ? "M2 4.500h5M4.500 2v5" : "M2 4.500h5"} stroke="#2c4f9e" /></svg>
        </Toggle>
      )}
    </Guide>
    {icon && <TreeIcon><Art name={icon} /></TreeIcon>}
    <TreeText $sel={sel}>{text}</TreeText>
  </TreeRow>
);

const Browser = () => (
  <Palette>
    <PaletteHead>项目浏览器 - 长安路-消防泵房(整体模...<CloseX /></PaletteHead>
    <PaletteBody>
      <Scroller>
        <Fill><Tree>{tree.map((r, i) => <TreeLine key={i} {...r} />)}</Tree></Fill>
        <VBar><Chevron to="up" /><Grip $h={77} /><Chevron /></VBar>
      </Scroller>
    </PaletteBody>
    <Watermark>
      <svg width="30" height="36" viewBox="0 0 30 36" aria-hidden="true">
        <ellipse cx="11" cy="13" rx="10" ry="9" fill="#fff" fillOpacity=".8" stroke="#d5d5d5" />
        <path d="M8 9v-2h2v2M17 9v-2h2v2" stroke="#888" fill="none" />
        <ellipse cx="18" cy="23" rx="11" ry="10" fill="#fff" fillOpacity=".85" stroke="#777" />
        <circle cx="14" cy="20" r="1.500" fill="#444" /><circle cx="22" cy="20" r="1.500" fill="none" stroke="#777" />
      </svg>
      西安易筑机电
    </Watermark>
  </Palette>
);

const Status = () => (
  <StatusBar>
    <StatusText>单击可进行选择; 按 Tab 键并单击可选择其他项目; 按 Ctrl 键并单击可将新项目添加到选择集</StatusText>
    <Art name="people" />
    <SelectBox $w={205}><select aria-label="工作集"><option /></select><Chevron w={1} c="#999" /></SelectBox>
    <StatusGroup $gap={4} $w={48}><Art name="brush" />:0</StatusGroup>
    <StatusGroup $gap={8} $w={44}><Art name="options" /><Art name="exclude" /></StatusGroup>
    <SelectBox $w={167} $ink="#8a8a8a"><select aria-label="设计选项"><option>主模型</option></select><Chevron w={1} c="#999" /></SelectBox>
    <svg width="10" height="10"><path d="M7 1h2M7 5h2M4 5h2M7 9h2M4 9h2M1 9h2" stroke="#aaa" strokeWidth="2" /></svg>
  </StatusBar>
);

export default function App() {
  return (
    <Shell>
      <Global />
      <Header />
      <TabStrip />
      <ViewRibbon />
      <Work>
        <Properties />
        <Viewport />
        <Browser />
      </Work>
      <Status />
      <Annotations width="820" height="240" viewBox="0 0 820 240" aria-hidden="true">
        <path d="M401 15H478V70H401Z M664 37H806V117H664Z" fill="none" stroke={red} strokeWidth="3" />
        <path d="M448 80L454 105L443 102L414 224L412 224L434 100L424 98Z" fill={red} />
        <path d="M679 138L673 161L666 155L598 233L597 231L655 149L649 144Z" fill={red} />
      </Annotations>
    </Shell>
  );
}
